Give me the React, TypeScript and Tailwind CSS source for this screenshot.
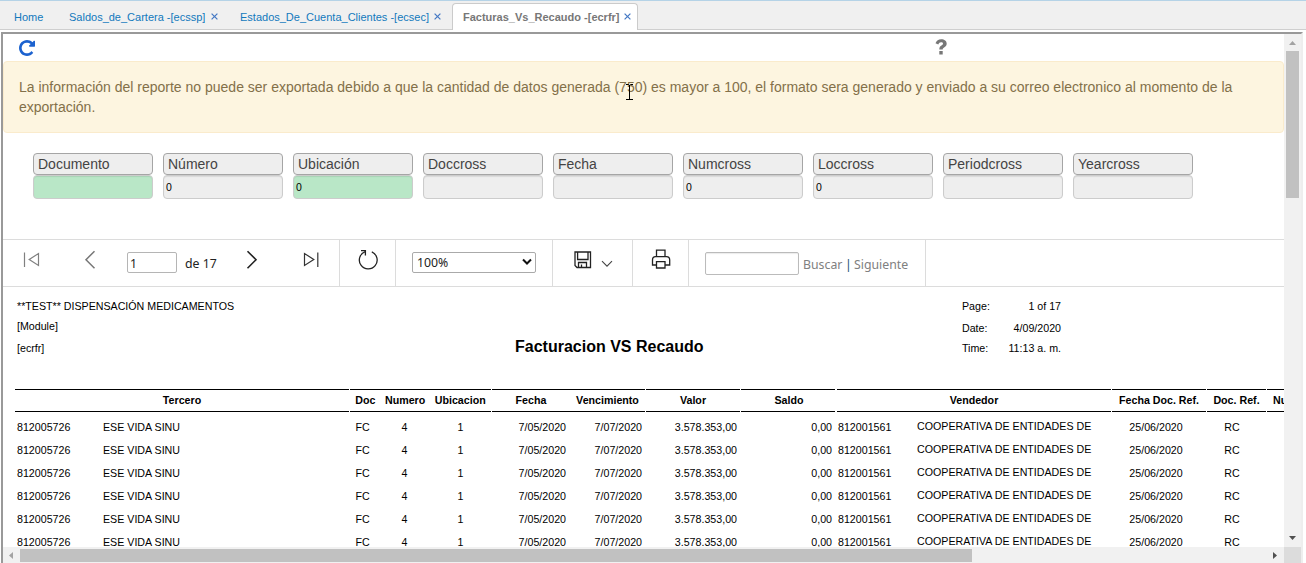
import React from "react";

const tabs = [
  { label: "Home", closable: false, left: "ml-[14px]", width: "w-[55px]" },
  { label: "Saldos_de_Cartera -[ecssp]", closable: true, left: "ml-0", width: "w-[137px]" },
  { label: "Estados_De_Cuenta_Clientes -[ecsec]", closable: true, left: "ml-[22px]", width: "w-[189px]" },
];

function CloseMark() {
  return (
    <svg width="7" height="7" viewBox="0 0 7 7" className="mb-[2px] ml-[5px] shrink-0" fill="none" stroke="#4478c4" strokeWidth="1.2">
      <path d="M0.6 0.6 6.4 6.4M6.4 0.6 0.6 6.4" />
    </svg>
  );
}

function TabBar() {
  return (
    <nav className="flex h-[30px] shrink-0 border-t border-[#b5d3e7] bg-[#f0f0f0] text-[11px] text-[#1279bd] shadow-[inset_0_-1px_0_#cfcfcf]">
      {tabs.map((t) => (
        <div key={t.label} className={`flex h-[32px] items-center whitespace-nowrap ${t.left}`}>
          <span className={t.width}>{t.label}</span>
          {t.closable && <CloseMark />}
        </div>
      ))}
      <div className="mt-[2px] ml-[11px] flex h-[27px] w-[186px] items-center rounded-t-[4px] border border-b-0 border-[#cbcbcb] bg-white pt-[1px] pl-[10px] font-bold whitespace-nowrap text-[#777]">
        <span className="w-[156px]">Facturas_Vs_Recaudo -[ecrfr]</span>
        <CloseMark />
      </div>
    </nav>
  );
}

const fields = [
  { label: "Documento", value: "", green: true },
  { label: "Número", value: "0" },
  { label: "Ubicación", value: "0", green: true },
  { label: "Doccross", value: "" },
  { label: "Fecha", value: "" },
  { label: "Numcross", value: "0" },
  { label: "Loccross", value: "0" },
  { label: "Periodcross", value: "" },
  { label: "Yearcross", value: "" },
];

function Fields() {
  return (
    <div className="mt-[20px] flex h-[86px] shrink-0 gap-[10px] pl-[30px]">
      {fields.map((f) => (
        <div key={f.label} className="w-[120px] shrink-0">
          <div className="h-[22px] rounded-[4px] border border-[#a5a5a5] bg-[#eee] pl-[4px] text-[14px] leading-[20px] text-[#444]">
            {f.label}
          </div>
          <div
            className={`h-[24px] rounded-[4px] border border-[#ccc] pl-[2px] text-[10.5px] leading-[22px] text-black shadow-[inset_0_1px_1px_rgba(0,0,0,0.09)] ${f.green ? "bg-[#b9e7c7]" : "bg-[#eee]"}`}
          >
            {f.value}
          </div>
        </div>
      ))}
    </div>
  );
}

function ReportToolbar() {
  return (
    <div className="flex h-[48px] shrink-0 border-y border-[#dcdcdc] font-['Noto_Sans','Open_Sans',sans-serif] text-[12.3px] text-[#222]">
      <div className="flex w-[337px] shrink-0 border-r border-[#dcdcdc]">
        <svg width="18" height="16" viewBox="0 0 18 16" className="mt-[12px] ml-[20px] shrink-0" fill="none" stroke="#808080" strokeWidth="1.2">
          <path d="M1.5 0.5V15M15.5 1.5V13.5L6.2 7.5Z" />
        </svg>
        <svg width="12" height="20" viewBox="0 0 12 20" className="mt-[10px] ml-[43px] shrink-0" fill="none" stroke="#777" strokeWidth="1.5">
          <path d="M10.5 1.2 2 9.7 10.5 18.2" />
        </svg>
        <div className="mt-[12px] ml-[31px] h-[21px] w-[50px] shrink-0 rounded-[2px] border border-[#b5b5b5] bg-white pl-[2px] leading-[21px]">1</div>
        <div className="mt-[15px] ml-[8px] w-[60px] shrink-0 leading-[18px]">de 17</div>
        <svg width="13" height="20" viewBox="0 0 13 20" className="mt-[10px] ml-[1px] shrink-0" fill="none" stroke="#222" strokeWidth="1.6">
          <path d="M1.5 1.2 10 9.7 1.5 18.2" />
        </svg>
        <svg width="18" height="16" viewBox="0 0 18 16" className="mt-[12px] ml-[43px] shrink-0" fill="none" stroke="#333" strokeWidth="1.2">
          <path d="M2.5 1.5V13.5L11.8 7.5Z" />
          <path d="M15.8 0.5V15" />
        </svg>
      </div>
      <div className="flex w-[56px] shrink-0 border-r border-[#dcdcdc]">
        <svg width="22" height="22" viewBox="0 0 22 22" className="mt-[9px] ml-[17px] shrink-0" fill="none" stroke="#222" strokeWidth="1.3">
          <path d="M14.8 2.900A8.900 8.900 0 1 1 8.200 2.700" />
          <path d="M4 1.700H8.400V6.400" />
        </svg>
      </div>
      <div className="flex w-[157px] shrink-0 border-r border-[#dcdcdc]">
        <div className="mt-[12px] ml-[16px] flex h-[21px] w-[124px] items-center justify-between rounded-[2px] border border-[#aaa] bg-white pr-[3px] pl-[4px]">
          <span className="pt-[2px]">100%</span>
          <svg width="10" height="8" viewBox="0 0 10 8" className="mb-[1px]" fill="none" stroke="#111" strokeWidth="2">
            <path d="M1 1.5 5 5.5 9 1.5" />
          </svg>
        </div>
      </div>
      <div className="flex w-[80px] shrink-0 border-r border-[#dcdcdc]">
        <svg width="18" height="18" viewBox="0 0 18 18" className="mt-[11px] ml-[21px] shrink-0" fill="none" stroke="#222" strokeWidth="1.3">
          <path d="M1 1H16.500V16.500H3L1 14.500ZM3.600 1V8.500H14V1M4.500 16.500V11.500H12.500V16.500M7.500 16.500V13.500" />
        </svg>
        <svg width="12" height="8" viewBox="0 0 12 8" className="mt-[20px] ml-[9px] shrink-0" fill="none" stroke="#444" strokeWidth="1.1">
          <path d="M1 1.2 6 6.2 11 1.2" />
        </svg>
      </div>
      <div className="flex w-[56px] shrink-0 border-r border-[#dcdcdc]">
        <svg width="20" height="20" viewBox="0 0 20 20" className="mt-[9px] ml-[18px] shrink-0" fill="none" stroke="#222" strokeWidth="1.3">
          <path d="M5.500 7.500V1.200H14V7.500M5.500 16H1.500V11Q1.500 7.700 4.500 7.700H15.500Q18.700 7.700 18.700 11V16H14M5.500 12.700H14V19H5.500Z" />
        </svg>
      </div>
      <div className="flex w-[237px] shrink-0 border-r border-[#dcdcdc]">
        <div className="mt-[12px] ml-[16px] h-[23px] w-[94px] shrink-0 rounded-[2px] border border-[#bbb] bg-white shadow-[inset_0_1px_1px_rgba(0,0,0,0.08)]" />
        <div className="mt-[16px] ml-[4px] flex leading-[18px] whitespace-nowrap text-[#808080]">
          <span className="w-[42px]">Buscar</span>
          <span className="w-[9px] text-[#1a4f75]">|</span>
          <span>Siguiente</span>
        </div>
      </div>
    </div>
  );
}

const line = "border-y border-black h-[23px] leading-[20px] flex shrink-0";

function HeaderRow() {
  return (
    <div className="flex gap-px font-bold">
      <div className={`${line} w-[334px] justify-center`}>Tercero</div>
      <div className={`${line} w-[141px]`}>
        <span className="w-[31px] text-center">Doc</span>
        <span className="w-[49px] text-center">Numero</span>
        <span className="w-[62px] text-center">Ubicacion</span>
      </div>
      <div className={`${line} w-[153px]`}>
        <span className="w-[78px] text-center">Fecha</span>
        <span className="w-[75px] text-center">Vencimiento</span>
      </div>
      <div className={`${line} w-[94px] justify-center`}>Valor</div>
      <div className={`${line} w-[94px] justify-center pl-[2px]`}>Saldo</div>
      <div className={`${line} ml-px w-[274px] justify-center`}>Vendedor</div>
      <div className={`${line} w-[94px] justify-center`}>Fecha Doc. Ref.</div>
      <div className={`${line} w-[59px] justify-center`}>Doc. Ref.</div>
      <div className={`${line} w-[95px] pl-[6px]`}>Numero</div>
    </div>
  );
}

function DataRow() {
  return (
    <div className="flex h-[23px] leading-[23px] whitespace-nowrap">
      <span className="w-[86px] shrink-0 pl-[2px]">812005726</span>
      <span className="w-[249px] shrink-0 pl-[2px]">ESE VIDA SINU</span>
      <span className="w-[25px] shrink-0 text-center">FC</span>
      <span className="w-[59px] shrink-0 text-center">4</span>
      <span className="w-[53px] shrink-0 text-center">1</span>
      <span className="w-[79px] shrink-0 text-right">7/05/2020</span>
      <span className="w-[76px] shrink-0 text-right">7/07/2020</span>
      <span className="w-[95px] shrink-0 text-right">3.578.353,00</span>
      <span className="w-[95px] shrink-0 text-right">0,00</span>
      <span className="w-[85px] shrink-0 pl-[6px]">812001561</span>
      <span className="-mt-px w-[195px] shrink-0">COOPERATIVA DE ENTIDADES DE</span>
      <span className="w-[88px] shrink-0 text-center">25/06/2020</span>
      <span className="w-[64px] shrink-0 text-center">RC</span>
    </div>
  );
}

function Report() {
  return (
    <div className="min-h-0 flex-1 overflow-hidden pl-[12px] text-[10.67px] text-black">
      <div className="flex h-[102px]">
        <div className="w-[500px] shrink-0 pt-[9px] pl-[2px] leading-[21px]">
          <div className="h-[20px]">**TEST** DISPENSACIÓN MEDICAMENTOS</div>
          <div className="h-[22px]">[Module]</div>
          <div>[ecrfr]</div>
        </div>
        <div className="w-[447px] shrink-0 pt-[48px] text-[16px] leading-[23px] font-bold">Facturacion VS Recaudo</div>
        <div className="w-[99px] shrink-0 pt-[9px] leading-[21px]">
          <div className="flex h-[22px] justify-between"><span>Page:</span><span>1 of 17</span></div>
          <div className="flex h-[20px] justify-between"><span>Date:</span><span>4/09/2020</span></div>
          <div className="flex justify-between"><span>Time:</span><span>11:13 a. m.</span></div>
        </div>
      </div>
      <HeaderRow />
      <div className="pt-[4px]">
        {[0, 1, 2, 3, 4, 5].map((i) => (
          <DataRow key={i} />
        ))}
      </div>
    </div>
  );
}

function VerticalScrollbar() {
  return (
    <div className="flex w-[17px] shrink-0 flex-col items-center bg-[#f1f1f1]">
      <svg width="7" height="4" viewBox="0 0 7 4" className="mt-[7px] shrink-0" fill="#a3a3a3"><path d="M3.5 0 7 4H0Z" /></svg>
      <div className="mt-[6px] h-[147px] w-[13px] shrink-0 bg-[#c1c1c1]" />
      <svg width="7" height="4" viewBox="0 0 7 4" className="mt-auto mb-[7px] shrink-0" fill="#505050"><path d="M0 0H7L3.5 4Z" /></svg>
    </div>
  );
}

export default function App() {
  return (
    <div className="flex h-[563px] w-[1306px] flex-col overflow-hidden bg-white font-['Liberation_Sans',Arial,sans-serif]">
      <TabBar />
      <div className="mt-[2px] ml-[1px] flex min-h-0 w-[1302px] flex-1 flex-col border-t-2 border-r-2 border-l-2 border-t-[#999] border-r-[#eee] border-l-[#999]">
        <div className="flex h-[513px] shrink-0">
          <div className="relative flex w-[1281px] shrink-0 flex-col overflow-hidden">
            <div className="flex h-[27px] shrink-0">
              <svg width="16" height="16" viewBox="0 0 1536 1536" className="mt-[6px] ml-[16px] shrink-0" fill="#1c62cf">
                <path d="M1536 128v448q0 26-19 45t-45 19h-448q-42 0-59-40-17-39 14-69l138-138Q969 256 768 256q-104 0-198.500 40.500T406 406 296.500 569.500 256 768t40.500 198.500T406 1130t163.500 109.500T768 1280q119 0 225-52t179-147q7-10 23-12 14 0 25 9l137 138q9 8 9.500 20.500T1358 1259q-109 132-264 204.500T768 1536q-156 0-298-61t-245-164-164-245T0 768t61-298 164-245T470 61 768 0q147 0 284.500 55.500T1297 212l130-129q29-31 70-14 39 17 39 59z" />
              </svg>
              <svg width="12" height="16" viewBox="0 0 12 16" className="mt-[5px] ml-[900px] shrink-0" fill="#777">
                <path d="M0.500 4.300C1.600 1.500 3.400 0.300 6.200 0.300 9.400 0.300 11.700 2.100 11.700 4.700 11.700 6.700 10.500 7.600 9.100 8.500 8 9.200 7.700 9.600 7.700 10.500H4.300C4.300 8.200 5.200 7.300 6.800 6.300 7.700 5.700 8 5.300 8 4.600 8 3.700 7.200 3.200 6 3.200 4.700 3.200 4 3.900 3.300 5.500ZM4.300 12H7.700V15.400H4.300Z" />
              </svg>
            </div>
            <div className="h-[72px] shrink-0 rounded-[4px] border border-[#faebcc] bg-[#fdf5e0] pt-[15px] pl-[15px] text-[14px] leading-[20px] text-[#837049]">
              <div className="whitespace-nowrap">La información del reporte no puede ser exportada debido a que la cantidad de datos generada (750) es mayor a 100, el formato sera generado y enviado a su correo electronico al momento de la</div>
              <div>exportación.</div>
            </div>
            <svg width="9" height="17" viewBox="0 0 9 17" className="absolute top-[50px] left-[622px]" fill="none" stroke="#000" strokeWidth="1">
              <path d="M1 0.500H3.500L4.500 1.500 5.500 0.500H8M4.500 1V15.500M1 15.500H8" />
            </svg>
            <Fields />
            <ReportToolbar />
            <Report />
          </div>
          <VerticalScrollbar />
        </div>
        <div className="flex h-[16px] shrink-0 items-center bg-[#f1f1f1]">
          <svg width="4" height="7" viewBox="0 0 4 7" className="ml-[6px] shrink-0" fill="#a3a3a3"><path d="M4 0V7L0 3.500Z" /></svg>
          <div className="ml-[7px] h-[13px] w-[952px] shrink-0 bg-[#c1c1c1]" />
          <svg width="4" height="7" viewBox="0 0 4 7" className="ml-auto shrink-0" fill="#505050"><path d="M0 0V7L4 3.500Z" /></svg>
          <div className="ml-[7px] h-[16px] w-[17px] shrink-0 bg-[#dcdcdc]" />
        </div>
      </div>
    </div>
  );
}
